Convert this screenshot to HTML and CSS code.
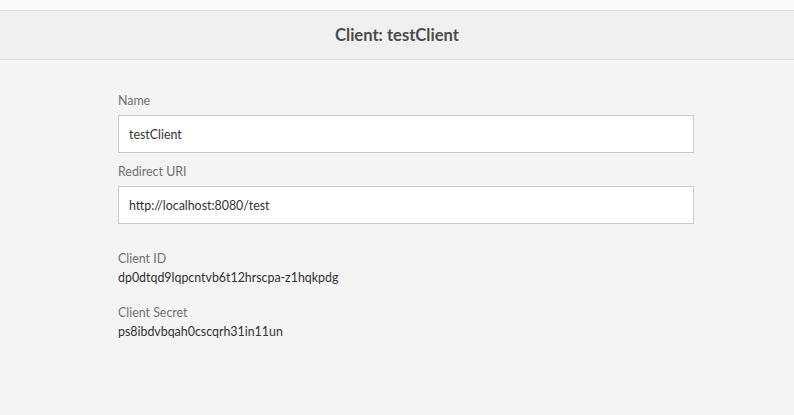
FILE: index.html
```html
<!DOCTYPE html>
<html>
<head>
<meta charset="utf-8">
<link rel="stylesheet" href="styles.css">
</head>
<body>
<div class="topstrip"></div>
<header class="header"><h1 class="title">Client: testClient</h1></header>
<main class="content">
  <div class="field">
    <label class="label">Name</label>
    <div class="input">testClient</div>
  </div>
  <div class="field">
    <label class="label">Redirect URI</label>
    <div class="input">http://localhost:8080/test</div>
  </div>
  <div class="info">
    <div class="label">Client ID</div>
    <div class="value">dp0dtqd9lqpcntvb6t12hrscpa-z1hqkpdg</div>
  </div>
  <div class="info">
    <div class="label">Client Secret</div>
    <div class="value">ps8ibdvbqah0cscqrh31in11un</div>
  </div>
</main>
</body>
</html>
```
FILE: styles.css
```css
html, body {
  margin: 0;
  padding: 0;
  height: 100%;
}
body {
  background: #f4f4f4;
  font-family: Lato, "Open Sans", sans-serif;
  color: #323232;
}
.topstrip {
  height: 10px;
  background: #fafafa;
  border-bottom: 1px solid #dcdcdc;
}
.header {
  height: 48px;
  background: #f0f0f0;
  border-bottom: 1px solid #dcdcdc;
  display: flex;
  align-items: center;
  justify-content: center;
}
.title {
  margin: 0;
  font-size: 16.6px;
  font-weight: 700;
  color: #4b4b4b;
}
.content {
  width: 576px;
  margin-left: 118px;
  padding-top: 33px;
}
.field {
  display: flex;
  flex-direction: column;
  margin-bottom: 11px;
}
.label {
  font-size: 12.4px;
  color: #707070;
  line-height: 16px;
  margin-bottom: 6px;
}
.input {
  box-sizing: border-box;
  height: 38px;
  background: #fff;
  border: 1px solid #cacaca;
  padding: 0 10px;
  display: flex;
  align-items: center;
  font-size: 12.4px;
  color: #323232;
}
.info {
  margin-top: 27px;
}
.info .label {
  margin-bottom: 3px;
}
.value {
  font-size: 12.4px;
  line-height: 16px;
  color: #323232;
}
.info + .info {
  margin-top: 19px;
}
```
